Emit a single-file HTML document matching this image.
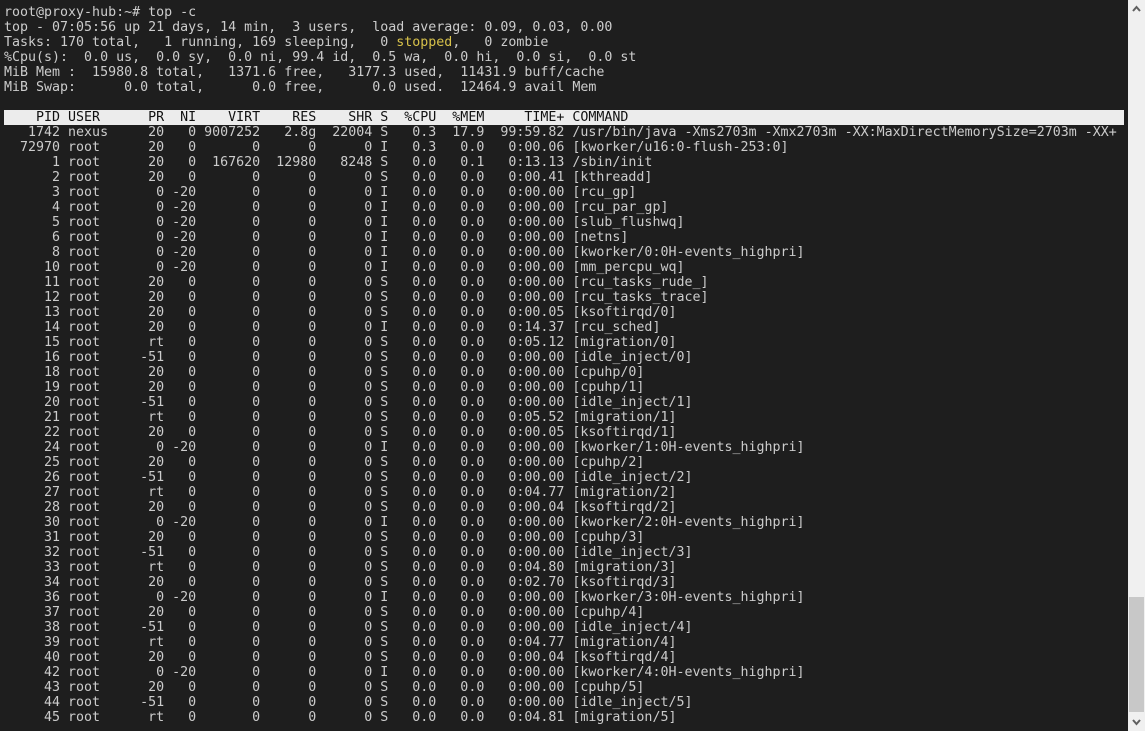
<!DOCTYPE html>
<html><head><meta charset="utf-8"><style>
html,body{margin:0;padding:0;background:#1e1e1e;width:1145px;height:731px;overflow:hidden}
pre{position:absolute;left:4px;top:5px;margin:0;font-family:"DejaVu Sans Mono","Liberation Mono",monospace;font-size:13.3px;line-height:15px;color:#cccccc;white-space:pre}
.h{display:inline-block;width:1120px;background:#ececec;color:#111}
.y{color:#d7c14a}
.sb{position:absolute;left:1128px;top:0;width:17px;height:731px;background:#f0f0f0}
.th{position:absolute;left:1129px;top:597px;width:15px;height:115px;background:#c8c8c8}
</style></head><body>
<pre>root@proxy-hub:~# top -c
top - 07:05:56 up 21 days, 14 min,  3 users,  load average: 0.09, 0.03, 0.00
Tasks: 170 total,   1 running, 169 sleeping,   0 <span class="y">stopped</span>,   0 zombie
%Cpu(s):  0.0 us,  0.0 sy,  0.0 ni, 99.4 id,  0.5 wa,  0.0 hi,  0.0 si,  0.0 st
MiB Mem :  15980.8 total,   1371.6 free,   3177.3 used,  11431.9 buff/cache
MiB Swap:      0.0 total,      0.0 free,      0.0 used.  12464.9 avail Mem

<span class="h">    PID USER      PR  NI    VIRT    RES    SHR S  %CPU  %MEM     TIME+ COMMAND</span>
   1742 nexus     20   0 9007252   2.8g  22004 S   0.3  17.9  99:59.82 /usr/bin/java -Xms2703m -Xmx2703m -XX:MaxDirectMemorySize=2703m -XX+
  72970 root      20   0       0      0      0 I   0.3   0.0   0:00.06 [kworker/u16:0-flush-253:0]
      1 root      20   0  167620  12980   8248 S   0.0   0.1   0:13.13 /sbin/init
      2 root      20   0       0      0      0 S   0.0   0.0   0:00.41 [kthreadd]
      3 root       0 -20       0      0      0 I   0.0   0.0   0:00.00 [rcu_gp]
      4 root       0 -20       0      0      0 I   0.0   0.0   0:00.00 [rcu_par_gp]
      5 root       0 -20       0      0      0 I   0.0   0.0   0:00.00 [slub_flushwq]
      6 root       0 -20       0      0      0 I   0.0   0.0   0:00.00 [netns]
      8 root       0 -20       0      0      0 I   0.0   0.0   0:00.00 [kworker/0:0H-events_highpri]
     10 root       0 -20       0      0      0 I   0.0   0.0   0:00.00 [mm_percpu_wq]
     11 root      20   0       0      0      0 S   0.0   0.0   0:00.00 [rcu_tasks_rude_]
     12 root      20   0       0      0      0 S   0.0   0.0   0:00.00 [rcu_tasks_trace]
     13 root      20   0       0      0      0 S   0.0   0.0   0:00.05 [ksoftirqd/0]
     14 root      20   0       0      0      0 I   0.0   0.0   0:14.37 [rcu_sched]
     15 root      rt   0       0      0      0 S   0.0   0.0   0:05.12 [migration/0]
     16 root     -51   0       0      0      0 S   0.0   0.0   0:00.00 [idle_inject/0]
     18 root      20   0       0      0      0 S   0.0   0.0   0:00.00 [cpuhp/0]
     19 root      20   0       0      0      0 S   0.0   0.0   0:00.00 [cpuhp/1]
     20 root     -51   0       0      0      0 S   0.0   0.0   0:00.00 [idle_inject/1]
     21 root      rt   0       0      0      0 S   0.0   0.0   0:05.52 [migration/1]
     22 root      20   0       0      0      0 S   0.0   0.0   0:00.05 [ksoftirqd/1]
     24 root       0 -20       0      0      0 I   0.0   0.0   0:00.00 [kworker/1:0H-events_highpri]
     25 root      20   0       0      0      0 S   0.0   0.0   0:00.00 [cpuhp/2]
     26 root     -51   0       0      0      0 S   0.0   0.0   0:00.00 [idle_inject/2]
     27 root      rt   0       0      0      0 S   0.0   0.0   0:04.77 [migration/2]
     28 root      20   0       0      0      0 S   0.0   0.0   0:00.04 [ksoftirqd/2]
     30 root       0 -20       0      0      0 I   0.0   0.0   0:00.00 [kworker/2:0H-events_highpri]
     31 root      20   0       0      0      0 S   0.0   0.0   0:00.00 [cpuhp/3]
     32 root     -51   0       0      0      0 S   0.0   0.0   0:00.00 [idle_inject/3]
     33 root      rt   0       0      0      0 S   0.0   0.0   0:04.80 [migration/3]
     34 root      20   0       0      0      0 S   0.0   0.0   0:02.70 [ksoftirqd/3]
     36 root       0 -20       0      0      0 I   0.0   0.0   0:00.00 [kworker/3:0H-events_highpri]
     37 root      20   0       0      0      0 S   0.0   0.0   0:00.00 [cpuhp/4]
     38 root     -51   0       0      0      0 S   0.0   0.0   0:00.00 [idle_inject/4]
     39 root      rt   0       0      0      0 S   0.0   0.0   0:04.77 [migration/4]
     40 root      20   0       0      0      0 S   0.0   0.0   0:00.04 [ksoftirqd/4]
     42 root       0 -20       0      0      0 I   0.0   0.0   0:00.00 [kworker/4:0H-events_highpri]
     43 root      20   0       0      0      0 S   0.0   0.0   0:00.00 [cpuhp/5]
     44 root     -51   0       0      0      0 S   0.0   0.0   0:00.00 [idle_inject/5]
     45 root      rt   0       0      0      0 S   0.0   0.0   0:04.81 [migration/5]</pre>
<div class="sb"></div>
<div class="th"></div>
<svg style="position:absolute;left:1128px;top:0" width="17" height="17"><path d="M5 11 L8.5 7 L12 11" stroke="#606060" stroke-width="2" fill="none"/></svg>
<svg style="position:absolute;left:1128px;top:714px" width="17" height="17"><path d="M5 6 L8.5 10 L12 6" stroke="#606060" stroke-width="2" fill="none"/></svg>
</body></html>
